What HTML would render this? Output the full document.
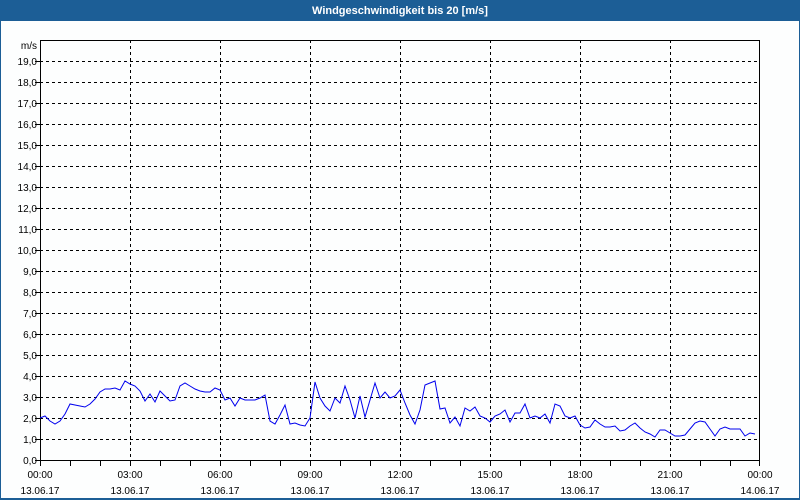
<!DOCTYPE html>
<html><head><meta charset="utf-8"><style>
html,body{margin:0;padding:0;width:800px;height:500px;overflow:hidden;background:#fff;font-family:"Liberation Sans","DejaVu Sans",sans-serif}
</style></head><body>
<svg width="800" height="500" xmlns="http://www.w3.org/2000/svg" font-family="Liberation Sans, DejaVu Sans, sans-serif">
<rect x="0" y="0" width="800" height="500" fill="#1c5e96"/>
<rect x="1" y="21" width="798" height="477" fill="#fdfefe"/>
<text x="400" y="14" fill="#fff" font-size="11" font-weight="bold" text-anchor="middle">Windgeschwindigkeit bis 20 [m/s]</text>
<g stroke="#000" stroke-width="1" stroke-dasharray="3,3" fill="none">
<path d="M40 61.5H760M40 82.5H760M40 103.5H760M40 124.5H760M40 145.5H760M40 166.5H760M40 187.5H760M40 208.5H760M40 229.5H760M40 250.5H760M40 271.5H760M40 292.5H760M40 313.5H760M40 334.5H760M40 355.5H760M40 376.5H760M40 397.5H760M40 418.5H760M40 439.5H760"/>
<path d="M130.5 40V460M220.5 40V460M310.5 40V460M400.5 40V460M490.5 40V460M580.5 40V460M670.5 40V460"/>
</g>
<g stroke="#000" stroke-width="1" fill="none">
<rect x="40.5" y="40.5" width="719" height="420"/>
<path d="M35 460.5H40M35 439.5H40M35 418.5H40M35 397.5H40M35 376.5H40M35 355.5H40M35 334.5H40M35 313.5H40M35 292.5H40M35 271.5H40M35 250.5H40M35 229.5H40M35 208.5H40M35 187.5H40M35 166.5H40M35 145.5H40M35 124.5H40M35 103.5H40M35 82.5H40M35 61.5H40"/>
<path d="M40.5 460V466M70.5 460V466M100.5 460V466M130.5 460V466M160.5 460V466M190.5 460V466M220.5 460V466M250.5 460V466M280.5 460V466M310.5 460V466M340.5 460V466M370.5 460V466M400.5 460V466M430.5 460V466M460.5 460V466M490.5 460V466M520.5 460V466M550.5 460V466M580.5 460V466M610.5 460V466M640.5 460V466M670.5 460V466M700.5 460V466M730.5 460V466M759.5 460V466"/>
</g>
<polyline fill="none" stroke="#0000ee" stroke-width="1" points="40,418 45,416 50,421 55,424 60,421 65,414 70,404 75,405 80,406 85,407 90,404 95,399 100,392 105,389 110,389 115,388 120,390 125,381 130,384 135,386 140,391 145,401 150,394 155,402 160,391 165,396 170,401 175,400 180,386 185,383 190,386 195,389 200,391 205,392 210,392 215,388 220,390 225,400 230,398 235,406 240,398 245,400 250,400 255,400 260,398 265,395 270,421 275,424 280,415 285,405 290,424 295,423 300,425 305,426 310,418 315,382 320,398 325,406 330,411 335,398 340,403 345,386 350,400 355,418 360,396 365,417 370,400 375,383 380,398 385,392 390,398 395,396 400,390 405,403 410,415 415,424 420,410 425,385 430,383 435,381 440,409 445,408 450,423 455,417 460,426 465,408 470,411 475,407 480,416 485,418 490,422 495,416 500,414 505,410 510,422 515,413 520,413 525,404 530,418 535,416 540,418 545,414 550,423 555,404 560,406 565,416 570,418 575,416 580,425 585,428 590,427 595,420 600,424 605,427 610,427 615,426 620,431 625,430 630,426 635,423 640,428 645,432 650,434 655,437 660,430 665,430 670,433 675,436 680,436 685,435 690,429 695,423 700,421 705,422 710,429 715,436 720,429 725,427 730,429 735,429 740,429 745,436 750,433 755,434"/>
<g font-size="10" fill="#000" text-anchor="end">
<text x="37" y="49">m/s</text>
<text x="37" y="65">19,0</text><text x="37" y="86">18,0</text><text x="37" y="107">17,0</text><text x="37" y="128">16,0</text><text x="37" y="149">15,0</text><text x="37" y="170">14,0</text><text x="37" y="191">13,0</text><text x="37" y="212">12,0</text><text x="37" y="233">11,0</text><text x="37" y="254">10,0</text><text x="37" y="275">9,0</text><text x="37" y="296">8,0</text><text x="37" y="317">7,0</text><text x="37" y="338">6,0</text><text x="37" y="359">5,0</text><text x="37" y="380">4,0</text><text x="37" y="401">3,0</text><text x="37" y="422">2,0</text><text x="37" y="443">1,0</text><text x="37" y="464">0,0</text>
</g>
<g font-size="10" fill="#000" text-anchor="middle">
<text x="40" y="478">00:00</text><text x="40" y="494">13.06.17</text>
<text x="130" y="478">03:00</text><text x="130" y="494">13.06.17</text>
<text x="220" y="478">06:00</text><text x="220" y="494">13.06.17</text>
<text x="310" y="478">09:00</text><text x="310" y="494">13.06.17</text>
<text x="400" y="478">12:00</text><text x="400" y="494">13.06.17</text>
<text x="490" y="478">15:00</text><text x="490" y="494">13.06.17</text>
<text x="580" y="478">18:00</text><text x="580" y="494">13.06.17</text>
<text x="670" y="478">21:00</text><text x="670" y="494">13.06.17</text>
<text x="760" y="478">00:00</text><text x="760" y="494">14.06.17</text>
</g>
</svg>
</body></html>
